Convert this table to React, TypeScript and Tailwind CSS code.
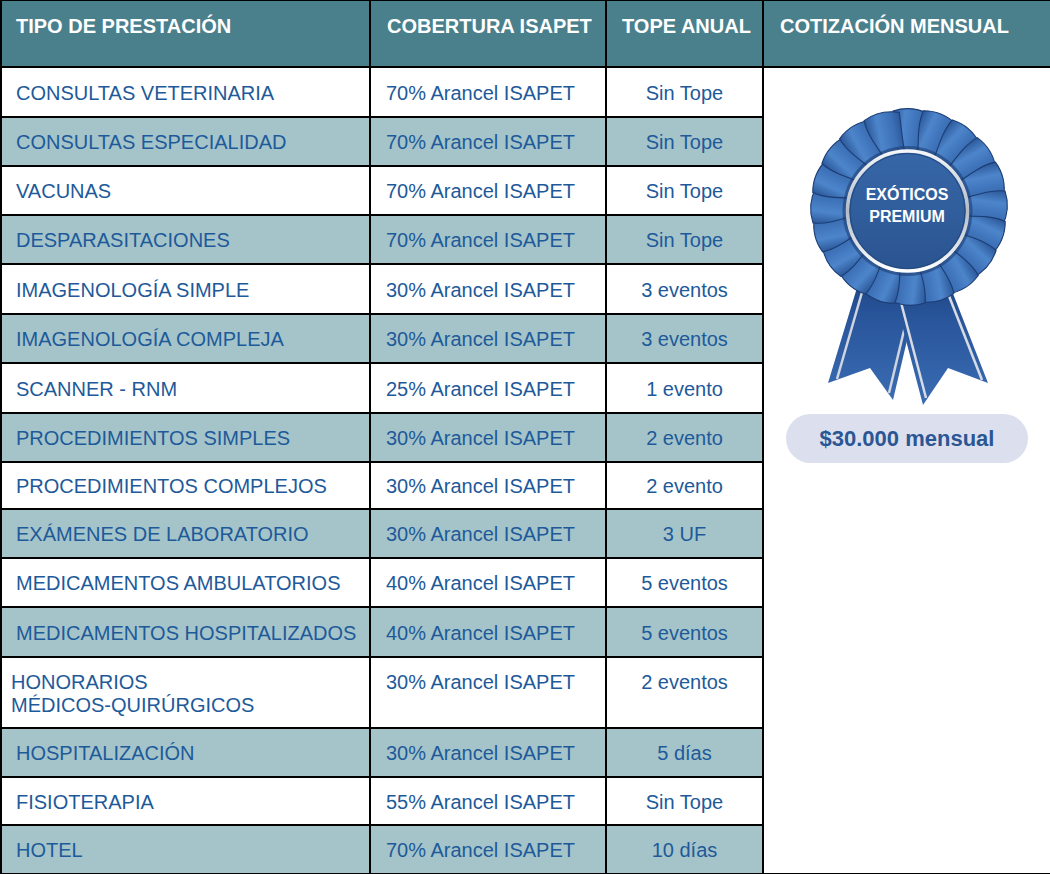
import React from "react";

type Row = { a: string; b: string; c: string; teal: boolean; tall?: boolean };

const rows: Row[] = [
  { a: "CONSULTAS VETERINARIA", b: "70% Arancel ISAPET", c: "Sin Tope", teal: false },
  { a: "CONSULTAS ESPECIALIDAD", b: "70% Arancel ISAPET", c: "Sin Tope", teal: true },
  { a: "VACUNAS", b: "70% Arancel ISAPET", c: "Sin Tope", teal: false },
  { a: "DESPARASITACIONES", b: "70% Arancel ISAPET", c: "Sin Tope", teal: true },
  { a: "IMAGENOLOGÍA SIMPLE", b: "30% Arancel ISAPET", c: "3 eventos", teal: false },
  { a: "IMAGENOLOGÍA COMPLEJA", b: "30% Arancel ISAPET", c: "3 eventos", teal: true },
  { a: "SCANNER - RNM", b: "25% Arancel ISAPET", c: "1 evento", teal: false },
  { a: "PROCEDIMIENTOS SIMPLES", b: "30% Arancel ISAPET", c: "2 evento", teal: true },
  { a: "PROCEDIMIENTOS COMPLEJOS", b: "30% Arancel ISAPET", c: "2 evento", teal: false },
  { a: "EXÁMENES DE LABORATORIO", b: "30% Arancel ISAPET", c: "3 UF", teal: true },
  { a: "MEDICAMENTOS AMBULATORIOS", b: "40% Arancel ISAPET", c: "5 eventos", teal: false },
  { a: "MEDICAMENTOS HOSPITALIZADOS", b: "40% Arancel ISAPET", c: "5 eventos", teal: true },
  { a: "HONORARIOS", b: "30% Arancel ISAPET", c: "2 eventos", teal: false, tall: true },
  { a: "HOSPITALIZACIÓN", b: "30% Arancel ISAPET", c: "5 días", teal: true },
  { a: "FISIOTERAPIA", b: "55% Arancel ISAPET", c: "Sin Tope", teal: false },
  { a: "HOTEL", b: "70% Arancel ISAPET", c: "10 días", teal: true },
];

const N = 20;

function Ribbon() {
  return (
    <div className="relative w-[220px] h-[300px]">
      <svg width="220" height="300" viewBox="0 0 220 300">
        <defs>
          <linearGradient id="petal" x1="0" y1="0" x2="1" y2="0.2">
            <stop offset="0" stopColor="#2a5697" />
            <stop offset="0.35" stopColor="#4d85cb" />
            <stop offset="0.75" stopColor="#3b6fb6" />
            <stop offset="1" stopColor="#2a5596" />
          </linearGradient>
          <linearGradient id="ribbon" x1="0" y1="0" x2="0" y2="1">
            <stop offset="0" stopColor="#1d417c" />
            <stop offset="0.35" stopColor="#28549a" />
            <stop offset="1" stopColor="#3a6cb3" />
          </linearGradient>
          <linearGradient id="disc" x1="0" y1="0" x2="0" y2="1">
            <stop offset="0" stopColor="#3767a8" />
            <stop offset="1" stopColor="#2a5490" />
          </linearGradient>
          <linearGradient id="silver" x1="0" y1="0" x2="0" y2="1">
            <stop offset="0" stopColor="#f4f6f9" />
            <stop offset="0.5" stopColor="#b5bcc7" />
            <stop offset="1" stopColor="#ffffff" />
          </linearGradient>
        </defs>
        {/* left tail */}
        <polygon points="66,160 127,160 96,292 73,260 31,275" fill="url(#ribbon)" />
        <line x1="72" y1="160" x2="40" y2="271" stroke="#cfd5de" strokeWidth="2.5" />
        <line x1="122" y1="160" x2="92" y2="285" stroke="#cfd5de" strokeWidth="2.5" />
        {/* right tail */}
        <polygon points="90,160 146,160 191,275 151,260 126,297" fill="url(#ribbon)" />
        <line x1="95" y1="160" x2="129" y2="290" stroke="#d7dce4" strokeWidth="2.5" />
        <line x1="141" y1="160" x2="185" y2="272" stroke="#d7dce4" strokeWidth="2.5" />
        {/* rosette */}
        <circle cx="112" cy="99" r="88" fill="#234a8a" />
        {Array.from({ length: N }).map((_, i) => (
          <g key={i} transform={`translate(112 99) rotate(${(i * 360) / N})`}>
            <path
              d="M-4 -40 C-10 -62 -18 -80 -16 -96 Q2 -102 20 -93 C17 -76 12 -58 12 -40 Z"
              fill="url(#petal)"
              stroke="#1c3d74"
              strokeWidth="1.1"
            />
          </g>
        ))}
        <circle cx="110.5" cy="103" r="65" fill="#1a396c" opacity="0.55" />
        <circle cx="110.5" cy="103" r="60" fill="url(#disc)" stroke="url(#silver)" strokeWidth="3.5" />
        <circle cx="110.5" cy="103" r="57.5" fill="none" stroke="#23497f" strokeWidth="1" />
      </svg>
      <div className="absolute left-0 right-0 top-[76px] text-center text-white font-bold text-[16px] leading-[22px] font-['Liberation_Sans',Arial,sans-serif]">
        <div>EXÓTICOS</div>
        <div>PREMIUM</div>
      </div>
    </div>
  );
}

export default function App() {
  return (
    <div className="w-[1050px] h-[874px] overflow-hidden bg-white font-['Liberation_Sans',Arial,sans-serif]">
      <div className="grid bg-black gap-[2px] pl-[2px] pt-[1px] pb-[2px] grid-cols-[367px_234px_155px_286px] grid-rows-[65px_48px_47px_47px_47px_48px_47px_48px_47px_45px_47px_47px_48px_69px_47px_46px_47px]">
        <div className="bg-[#4a7f8c] text-white font-bold text-[20px] leading-[23px] pt-[14px] pl-[14px] whitespace-nowrap">
          TIPO DE PRESTACIÓN
        </div>
        <div className="bg-[#4a7f8c] text-white font-bold text-[20px] leading-[23px] pt-[14px] pl-[16px] whitespace-nowrap">
          COBERTURA ISAPET
        </div>
        <div className="bg-[#4a7f8c] text-white font-bold text-[20px] leading-[23px] pt-[14px] pl-[15px] whitespace-nowrap">
          TOPE ANUAL
        </div>
        <div className="bg-[#4a7f8c] text-white font-bold text-[20px] leading-[23px] pt-[14px] pl-[16px] whitespace-nowrap">
          COTIZACIÓN MENSUAL
        </div>

        <div className="col-start-4 row-start-2 row-span-16 bg-white flex flex-col items-center pt-[40px]">
          <Ribbon />
          <div className="mt-[6px] w-[242px] h-[49px] rounded-full bg-[#dce0ee] flex items-center justify-center text-[22px] font-bold text-[#2b5694]">
            $30.000 mensual
          </div>
        </div>

        {rows.map((r, i) => {
          const bg = r.teal ? "bg-[#a4c4c9]" : "bg-white";
          if (r.tall) {
            return (
              <React.Fragment key={i}>
                <div className={`${bg} flex items-center pt-[2px] pl-[9px] text-[20px] leading-[23px] text-[#1e5a9a]`}>
                  <div>
                    HONORARIOS
                    <br />
                    MÉDICOS-QUIRÚRGICOS
                  </div>
                </div>
                <div className={`${bg} pt-[13px] pl-[15px] text-[20px] leading-[23px] text-[#1e5a9a] whitespace-nowrap`}>
                  {r.b}
                </div>
                <div className={`${bg} pt-[13px] text-center text-[20px] leading-[23px] text-[#1e5a9a] whitespace-nowrap`}>
                  {r.c}
                </div>
              </React.Fragment>
            );
          }
          return (
            <React.Fragment key={i}>
              <div className={`${bg} flex items-center pt-[2px] pl-[14px] text-[20px] leading-[23px] text-[#1e5a9a] whitespace-nowrap`}>
                {r.a}
              </div>
              <div className={`${bg} flex items-center pt-[2px] pl-[15px] text-[20px] leading-[23px] text-[#1e5a9a] whitespace-nowrap`}>
                {r.b}
              </div>
              <div className={`${bg} flex items-center justify-center pt-[2px] text-[20px] leading-[23px] text-[#1e5a9a] whitespace-nowrap`}>
                {r.c}
              </div>
            </React.Fragment>
          );
        })}
      </div>
    </div>
  );
}
